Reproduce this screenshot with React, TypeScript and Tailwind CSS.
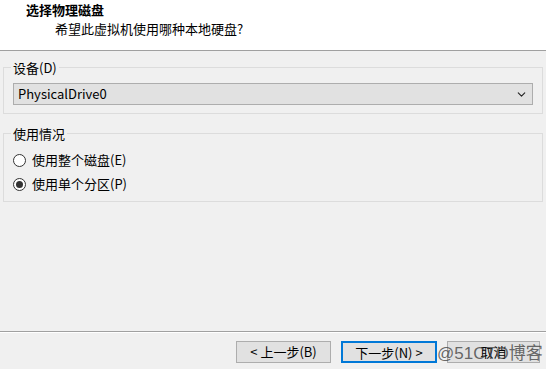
import { ChevronDown } from "lucide-react";

const font = { fontFamily: '"Noto Sans CJK SC", "Noto Sans", sans-serif' };

function Radio({ checked, label }: { checked?: boolean; label: string }) {
  return (
    <label className="flex h-[24px] items-center gap-[6px] pl-[9px]">
      <span className="flex h-[13px] w-[13px] items-center justify-center rounded-full border border-[#333] bg-white">
        {checked && <span className="h-[7px] w-[7px] rounded-full bg-[#333]" />}
      </span>
      <span>{label}</span>
    </label>
  );
}

export default function App() {
  return (
    <div
      className="relative flex h-[369px] w-[546px] flex-col bg-[#f0f0f0] text-[13px] text-black"
      style={font}
    >
      {/* Header */}
      <header className="h-[51px] border-b border-[#a0a0a0] bg-white">
        <div className="pl-[26px] pt-[1px] font-bold leading-[18px]">选择物理磁盘</div>
        <div className="pl-[55px] pt-[2px] leading-[16px]">希望此虚拟机使用哪种本地硬盘?</div>
      </header>

      <div className="flex flex-col gap-[11px] px-[3px] pt-[8px]">
        <fieldset className="m-0 border border-[#dcdcdc] px-[9px] pb-[8px] pt-[7px]">
          <legend className="-ml-[2px] px-[2px] leading-[17px]">设备(D)</legend>
          <div className="flex h-[22px] items-center justify-between border border-[#adadad] bg-[#e1e1e1] pl-[4px] pr-[4px]">
            <span>PhysicalDrive0</span>
            <ChevronDown className="h-[13px] w-[13px] text-[#222]" strokeWidth={2} />
          </div>
        </fieldset>

        <fieldset className="m-0 border border-[#dcdcdc] pb-[5px] pt-[6px]">
          <legend className="ml-[7px] px-[2px] leading-[17px]">使用情况</legend>
          <Radio label="使用整个磁盘(E)" />
          <Radio checked label="使用单个分区(P)" />
        </fieldset>
      </div>

      <div className="flex-1" />

      {/* Footer */}
      <footer className="h-[38px] border-t border-[#a0a0a0] shadow-[inset_0_1px_0_#fff]">
        <div className="flex justify-end gap-[10px] pr-[6px] pt-[9px]">
          <button className="h-[22px] w-[95px] border border-[#adadad] bg-[#e1e1e1]">&lt; 上一步(B)</button>
          <button className="h-[22px] w-[96px] border-2 border-[#0078d7] bg-[#e1e1e1]">下一步(N) &gt;</button>
          <button className="h-[22px] w-[93px] border border-[#adadad] bg-[#e1e1e1]">取消</button>
        </div>
      </footer>

      {/* watermark */}
      <div
        className="pointer-events-none absolute bottom-[5px] left-[437px] text-[17px] leading-[20px] text-[#444]/80"
        style={{ fontFamily: '"Liberation Sans", "Noto Sans CJK SC", sans-serif' }}
      >
        @51CTO博客
      </div>
    </div>
  );
}
